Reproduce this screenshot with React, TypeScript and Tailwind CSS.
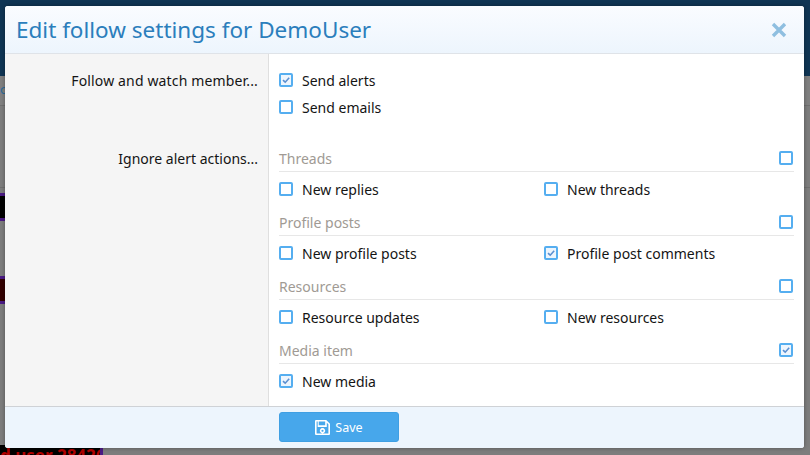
import React from "react";

function Box({ checked }: { checked?: boolean }) {
  return (
    <span className={`relative block w-[14px] h-[14px] border-2 border-[#55aef0] rounded-[2px] shrink-0 ${checked ? "bg-[#edf5fd]" : "bg-white"}`}>
      {checked && (
        <svg viewBox="0 0 10 10" className="absolute left-0 top-0 w-[10px] h-[10px]">
          <path d="M2 5.2 L4.2 7.2 L8.2 2.8" fill="none" stroke="#5b8fd0" strokeWidth="1.6" />
        </svg>
      )}
    </span>
  );
}

function Opt({ label, checked }: { label: string; checked?: boolean }) {
  return (
    <div className="flex items-center gap-[9px] h-[20px] w-[265px] shrink-0">
      <Box checked={checked} />
      <span>{label}</span>
    </div>
  );
}

function Group({ title, checked, a, b }: { title: string; checked?: boolean; a: [string, boolean?]; b?: [string, boolean?] }) {
  return (
    <div className="h-[64px]">
      <div className="flex justify-between h-[25px] border-b border-[#e7e7e7] leading-[20px]">
        <span className="text-[#a09a94] mt-[2px]">{title}</span>
        <span className="mr-[1px] mt-[4px]"><Box checked={checked} /></span>
      </div>
      <div className="flex mt-[7px]">
        <Opt label={a[0]} checked={a[1]} />
        {b && <Opt label={b[0]} checked={b[1]} />}
      </div>
    </div>
  );
}

function Row() {
  return <div className="h-[82px] border-b border-[#6f6f6f]" />;
}

export default function App() {
  return (
    <div className="w-[810px] h-[455px] overflow-hidden relative bg-[#7d7d7d] font-['Noto_Sans','Open_Sans',sans-serif] text-[14px] text-[#141414]">
      <div className="h-[76px] bg-[#0f3554]" />
      <div className="h-[30px] border-b border-[#6f6f6f] bg-[#808080] text-[#2b6a9a] text-[13px] leading-[26px] overflow-hidden whitespace-nowrap">og</div>
      <Row />
      <div className="absolute left-0 top-[193px] w-[6px] h-[28px] bg-[#000] border-y-[3px] border-[#4b1a85]" />
      <div className="absolute left-0 top-[276px] w-[6px] h-[28px] bg-[#300] border-y-[3px] border-[#4b1a85]" />
      <div className="absolute left-0 top-[445px] w-[103px] h-[10px] bg-[#000] border-r-[3px] border-[#4b1a85] text-[#b00000] text-[17px] font-bold leading-[22px] overflow-hidden whitespace-nowrap">d user 28426</div>
      <div className="absolute left-[5px] top-[6px] w-[799px] h-[442px] rounded-[3px] overflow-hidden bg-white flex flex-col shadow-[0_0_4px_rgba(0,0,0,0.35)]">
        <div className="h-[48px] shrink-0 flex items-center justify-between pl-[11px] pr-[17px] border-b border-[#dfe3e8] bg-gradient-to-b from-[#fafcff] to-[#edf5fd]">
          <span className="text-[22.5px] text-[#2b7ebc]">Edit follow settings for DemoUser</span>
          <svg viewBox="0 0 16 16" className="w-[16px] h-[16px]">
            <path d="M2 2 L14 14 M14 2 L2 14" stroke="#8fbfe0" strokeWidth="3.4" />
          </svg>
        </div>
        <div className="flex-1 flex min-h-0">
          <div className="w-[264px] shrink-0 bg-[#f5f5f5] border-r border-[#dfdfdf] pr-[10px] text-right">
            <div className="pt-[17px] h-[95px] leading-[20px] tracking-[0.15px]">Follow and watch member...</div>
            <div className="leading-[20px]">Ignore alert actions...</div>
          </div>
          <div className="flex-1 min-w-0 pl-[10px] pr-[10px]">
            <div className="pt-[16px] flex flex-col gap-[7px]">
              <Opt label="Send alerts" checked />
              <Opt label="Send emails" />
            </div>
            <div className="mt-[30px]">
              <Group title="Threads" a={["New replies"]} b={["New threads"]} />
              <Group title="Profile posts" a={["New profile posts"]} b={["Profile post comments", true]} />
              <Group title="Resources" a={["Resource updates"]} b={["New resources"]} />
              <Group title="Media item" checked a={["New media", true]} />
            </div>
          </div>
        </div>
        <div className="h-[42px] shrink-0 border-t border-[#cfd2d6] bg-[#edf5fd] flex items-start pt-[5px] pl-[274px]">
          <button className="w-[120px] h-[30px] rounded-[3px] bg-[#47a7eb] border border-[#3f9fe3] text-white text-[12.5px] flex items-center justify-center gap-[5px]">
            <svg viewBox="0 0 14 14" className="w-[15px] h-[15px] mt-[1px]">
              <path fillRule="evenodd" fill="#fff" d="M1 0 H10.5 L14 3.5 V13 a1 1 0 0 1 -1 1 H1 a1 1 0 0 1 -1 -1 V1 a1 1 0 0 1 1 -1 Z M3.5 1.5 V5 H9.5 V1.5 Z M1.5 1.5 V12.5 H12.5 V4 L11 2.5 V6.5 H2.5 V1.5 Z M7 7.5 a2.5 2.5 0 1 0 0.01 0 Z M7 9 a1 1 0 1 1 -0.01 0 Z" />
            </svg>
            <span className="mt-[2px]">Save</span>
          </button>
        </div>
      </div>
    </div>
  );
}
